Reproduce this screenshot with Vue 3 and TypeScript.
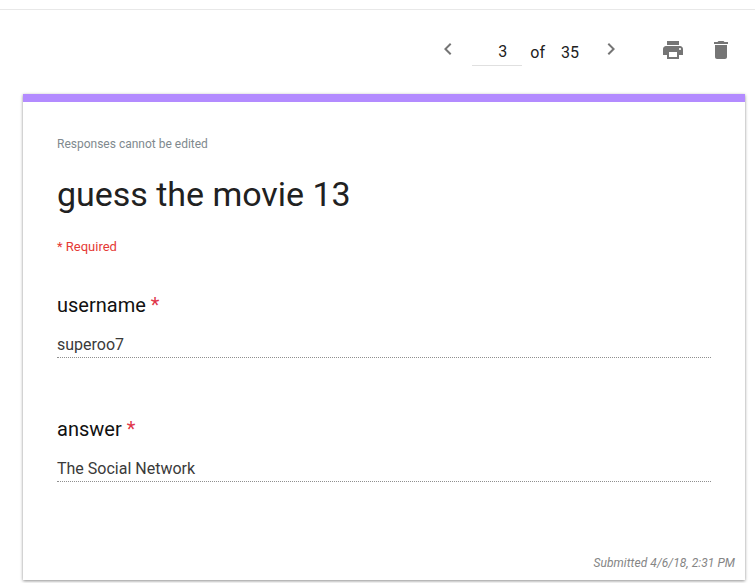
<script setup lang="ts">
const fields = [
  { label: 'username', value: 'superoo7' },
  { label: 'answer', value: 'The Social Network' },
]
</script>

<template>
  <div class="page">
    <div class="topbar">
      <div class="pager">
        <svg class="chev" viewBox="0 0 24 24" width="24" height="24"><path d="M15.41 7.41 14 6l-6 6 6 6 1.41-1.41L10.83 12z" /></svg>
        <div class="num">3</div>
        <span class="of">of</span>
        <span class="total">35</span>
        <svg class="chev next" viewBox="0 0 24 24" width="24" height="24"><path d="M10 6 8.59 7.41 13.17 12l-4.58 4.59L10 18l6-6z" /></svg>
      </div>
      <svg class="print" viewBox="0 0 24 24" width="24" height="24"><path d="M19 8H5c-1.66 0-3 1.34-3 3v6h4v4h12v-4h4v-6c0-1.66-1.34-3-3-3zm-3 11H8v-5h8v5zm3-7c-.55 0-1-.45-1-1s.45-1 1-1 1 .45 1 1-.45 1-1 1zm-1-9H6v4h12V3z" /></svg>
      <svg class="trash" viewBox="0 0 24 24" width="24" height="24"><path d="M6 19c0 1.1.9 2 2 2h8c1.1 0 2-.9 2-2V7H6v12zM19 4h-3.5l-1-1h-5l-1 1H5v2h14V4z" /></svg>
    </div>
    <main class="card">
      <p class="note">Responses cannot be edited</p>
      <h1 class="title">guess the movie 13</h1>
      <p class="required">* Required</p>
      <section v-for="f in fields" :key="f.label" class="field">
        <div class="label">{{ f.label }} <span class="star">*</span></div>
        <div class="value">{{ f.value }}</div>
      </section>
      <div class="submitted">Submitted 4/6/18, 2:31 PM</div>
    </main>
  </div>
</template>

<style>
html, body { background: #fff; }
</style>

<style scoped>
.page {
  width: 755px;
  height: 583px;
  overflow: hidden;
  background: #fff;
  font-family: Roboto, Arial, sans-serif;
  box-sizing: border-box;
  padding-top: 9px;
}
.topbar {
  height: 85px;
  box-sizing: border-box;
  border-top: 1px solid #e8e8e8;
  display: flex;
  align-items: flex-start;
  padding: 28px 22px 0 0;
  justify-content: flex-end;
}
.pager { display: flex; align-items: flex-start; margin-right: 38px; margin-top: -1px; }
svg { fill: #757575; display: block; flex: none; }
.num {
  width: 50px;
  height: 29px;
  margin-left: 12px;
  box-sizing: border-box;
  padding: 5px 15px 0 0;
  text-align: right;
  border-bottom: 1px solid #e0e0e0;
  font-size: 16px;
  line-height: 20px;
  color: #212121;
}
.of { margin: 6px 0 0 8px; font-size: 16px; line-height: 20px; color: #212121; }
.total { margin: 6px 0 0 16px; font-size: 16px; line-height: 20px; color: #212121; width: 20px; }
.next { margin-left: 18px; }
.trash { margin-left: 24px; }
.card {
  margin-left: 23px;
  width: 722px;
  height: 486px;
  box-sizing: border-box;
  border-top: 8px solid #b38bff;
  padding: 34px 34px 0;
  background: #fff;
  box-shadow: 0 1px 3px rgba(0, 0, 0, .45);
  position: relative;
}
.note { margin: 0; font-size: 12px; line-height: 16px; color: #80898e; }
.title { margin: 22px 0 0; font-size: 34px; font-weight: 400; line-height: 40px; color: #212121; letter-spacing: -.03px; }
.required { margin: 24px 0 0; font-size: 13px; line-height: 18px; color: #e53935; }
.field { margin-top: 36px; height: 88px; }
.label { font-size: 20px; line-height: 26px; color: #111; }
.star { color: #e0364a; }
.value {
  margin-top: 15px;
  height: 24px;
  font-size: 16px;
  line-height: 24px;
  color: #3a3a3a;
  border-bottom: 1px dotted #8f8f8f;
}
.submitted {
  position: absolute;
  right: 10px;
  bottom: 9px;
  font-size: 12px;
  line-height: 16px;
  font-style: italic;
  color: #858585;
  letter-spacing: .05px;
}
</style>
